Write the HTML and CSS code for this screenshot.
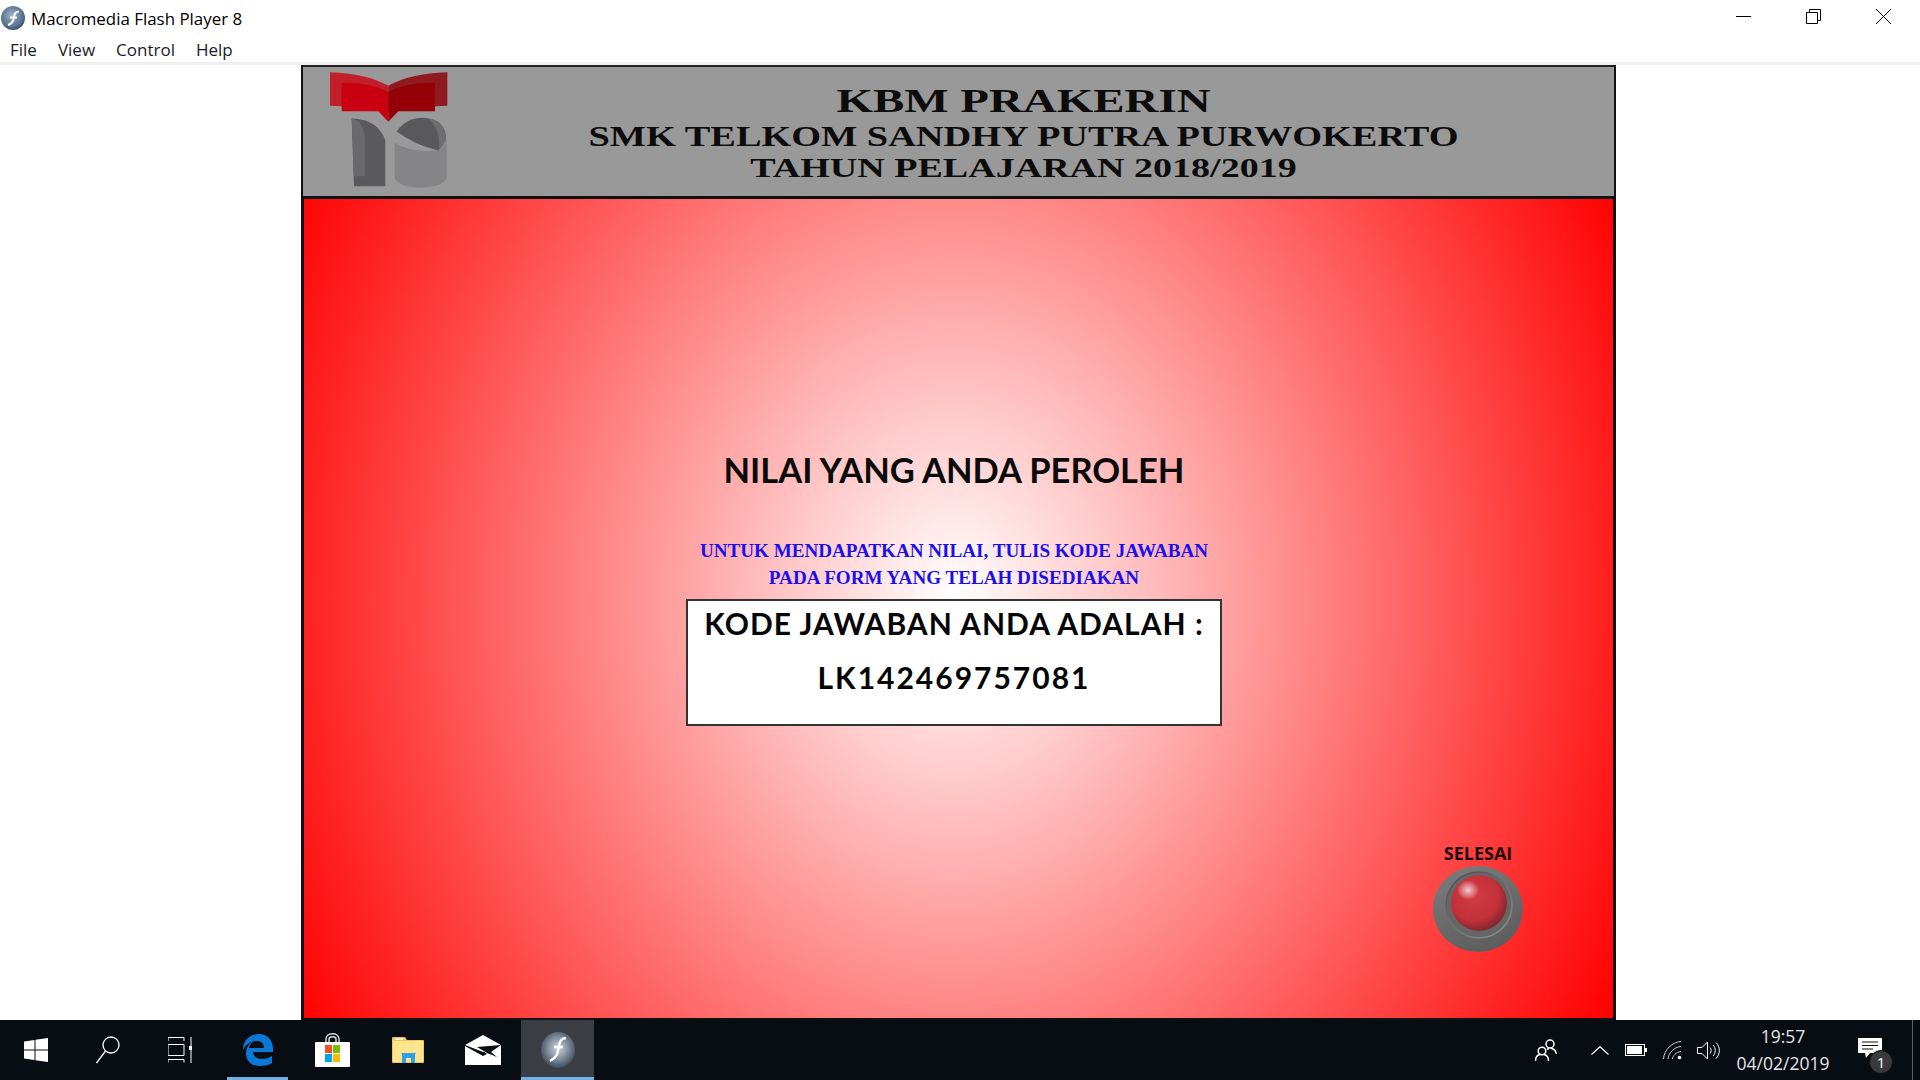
FILE: index.html
```html
<!DOCTYPE html>
<html lang="en">

<head>
    <meta charset="UTF-8">
    <title>Macromedia Flash Player 8</title>
    <link rel="stylesheet" href="styles.css">
</head>

<body>
    <div class="titlebar">
        <svg class="titlebar__icon" viewBox="0 0 24 24" width="24" height="24">
            <defs>
                <radialGradient id="flashSmall" cx="0.45" cy="0.4" r="0.65">
                    <stop offset="0" stop-color="#9fb1c6" />
                    <stop offset="0.7" stop-color="#5a7392" />
                    <stop offset="1" stop-color="#2f4258" />
                </radialGradient>
            </defs>
            <circle cx="12" cy="12" r="12" fill="url(#flashSmall)" />
            <path d="M18 5.500c-3.500 0-4.500 2-5 5.500s-1.500 7-6 8M9 11.500h7" fill="none" stroke="#fff" stroke-width="2" />
        </svg>
        <span class="titlebar__text">Macromedia Flash Player 8</span>
        <div class="window-controls">
            <svg viewBox="0 0 15 15" width="15" height="15">
                <path d="M0 7.500h15" stroke="#000" stroke-width="1" />
            </svg>
            <svg viewBox="0 0 15 15" width="15" height="15">
                <path d="M.5 3.500h11v11H.5zM3.500 3.500V.5h11v11h-3" fill="none" stroke="#000" stroke-width="1" />
            </svg>
            <svg viewBox="0 0 15 15" width="15" height="15">
                <path d="M0 0l15 15M15 0L0 15" stroke="#000" stroke-width="1" />
            </svg>
        </div>
    </div>
    <ul class="menubar">
        <li>File</li>
        <li>View</li>
        <li>Control</li>
        <li>Help</li>
    </ul>

    <div class="player">
        <div class="stage">
            <div class="stage__header">
                <svg class="logo" viewBox="60 30 354 350" width="118" height="117">
                    <path d="M60 33Q170 36 235 74V150L205 140L60 134z" fill="#c31f2b" />
                    <path d="M412 33Q300 36 235 74V150L265 140L412 134z" fill="#8f1a20" />
                    <path d="M95 65Q180 63 235 92V182L205 150H95z" fill="#c8000f" />
                    <path d="M375 65Q290 63 235 92V182L265 150H375z" fill="#950006" />
                    <path d="M125 172Q205 175 226 238V375H132z" fill="#5a595c" />
                    <path d="M125 172Q160 178 165 230V345H132z" fill="#6a696c" />
                    <path d="M254 245Q300 275 380 268L410 235V350Q400 378 330 380Q265 378 254 350z" fill="#858587" />
                    <path d="M260 210Q290 170 340 170Q408 175 408 235L385 268Q310 250 260 210z" fill="#59585b" />
                    <path d="M355 172Q408 180 408 235L385 268Q395 210 355 172z" fill="#6e6d70" />
                </svg>
                <div class="stage__title">
                    <div class="title-line title-line--big"><span>KBM PRAKERIN</span></div>
                    <div class="title-line title-line--mid"><span>SMK TELKOM SANDHY PUTRA PURWOKERTO</span></div>
                    <div class="title-line title-line--low"><span>TAHUN PELAJARAN 2018/2019</span></div>
                </div>
            </div>
            <div class="stage__body">
                <h2 class="score-title">NILAI YANG ANDA PEROLEH</h2>
                <p class="score-note">UNTUK MENDAPATKAN NILAI, TULIS KODE JAWABAN<br>PADA FORM YANG TELAH DISEDIAKAN</p>
                <div class="code-box">
                    <div class="code-box__label">KODE JAWABAN ANDA ADALAH :</div>
                    <div class="code-box__value">LK142469757081</div>
                </div>
                <div class="finish">
                    <span class="finish__label">SELESAI</span>
                    <svg viewBox="0 0 90 86" width="90" height="86">
                        <defs>
                            <linearGradient id="knobBase" x1="0.2" y1="0" x2="0.7" y2="1">
                                <stop offset="0" stop-color="#7b7b7b" />
                                <stop offset="1" stop-color="#5c5c5c" />
                            </linearGradient>
                            <linearGradient id="knobRing" x1="0.2" y1="0.1" x2="0.8" y2="0.9">
                                <stop offset="0" stop-color="#555" />
                                <stop offset="1" stop-color="#8a8a8a" />
                            </linearGradient>
                            <radialGradient id="knobBall" cx="0.42" cy="0.38" r="0.62">
                                <stop offset="0" stop-color="#d23c44" />
                                <stop offset="0.7" stop-color="#c2303a" />
                                <stop offset="1" stop-color="#84282e" />
                            </radialGradient>
                            <radialGradient id="knobShine" cx="0.5" cy="0.5" r="0.5">
                                <stop offset="0" stop-color="#fff" stop-opacity="0.75" />
                                <stop offset="1" stop-color="#fff" stop-opacity="0" />
                            </radialGradient>
                        </defs>
                        <ellipse cx="45" cy="43" rx="45" ry="43" fill="url(#knobBase)" />
                        <circle cx="46" cy="39" r="33" fill="#666" stroke="url(#knobRing)" stroke-width="1.500" />
                        <circle cx="46" cy="37" r="28" fill="url(#knobBall)" />
                        <ellipse cx="35" cy="24" rx="11" ry="10" fill="url(#knobShine)" />
                    </svg>
                </div>
            </div>
        </div>
    </div>

    <div class="taskbar">
        <div class="taskbar__btn">
            <svg viewBox="0 0 24 24" width="24" height="24">
                <path d="M0 3.500L10.500 2v9.500H0zM11.500 1.800L24 0v11.500H11.500zM0 12.500h10.500V22L0 20.500zM11.500 12.500H24V24l-12.500-1.800z" fill="#fff" />
            </svg>
        </div>
        <div class="taskbar__btn">
            <svg viewBox="0 0 24 28" width="24" height="28">
                <circle cx="15" cy="9" r="8" fill="none" stroke="#fff" stroke-width="1.300" />
                <path d="M9.500 15L.5 27" stroke="#fff" stroke-width="1.300" />
            </svg>
        </div>
        <div class="taskbar__btn">
            <svg viewBox="0 0 24 26" width="24" height="26">
                <path d="M0 4V.5h16v3.500M0 7.500h16v11H0zM16 25.500v-3H0v3M23 0v26" fill="none" stroke="#fff" stroke-width="1" />
                <rect x="21" y="9" width="4" height="4" fill="#fff" />
            </svg>
        </div>
        <div class="taskbar__apps">
            <div class="app app--open">
                <svg viewBox="0 0 30 32" width="30" height="32">
                    <path d="M0 16C0 6 7 0 16 0c9 0 14 7 14 15v3H10c.5 5 4 7 9 7 4 0 7-1 10-3v7c-3 2-7 3-12 3C7 32 3 26 3 19c0-5 3-10 8-12-3 2-4.500 4-5 7h15c0-4-2-7-7-7-6 0-11 3-14 9z" fill="#0a78d7" />
                </svg>
            </div>
            <div class="app">
                <svg viewBox="0 0 35 34" width="35" height="34">
                    <path d="M11 9V6c0-7 13-7 13 0v3M14 9V6c0-3 7-3 7 0v3" fill="none" stroke="#d8d8d8" stroke-width="1.500" />
                    <rect y="9" width="35" height="25" rx="1" fill="#fff" />
                    <rect x="10" y="12" width="7" height="8" fill="#f25022" />
                    <rect x="18" y="12" width="7" height="8" fill="#7fba00" />
                    <rect x="10" y="21" width="7" height="8" fill="#00a4ef" />
                    <rect x="18" y="21" width="7" height="8" fill="#ffb900" />
                </svg>
            </div>
            <div class="app">
                <svg viewBox="0 0 32 26" width="32" height="26">
                    <path d="M0 1a1 1 0 0 1 1-1h12l2 3h16a1 1 0 0 1 1 1v21a1 1 0 0 1-1 1H1a1 1 0 0 1-1-1z" fill="#f0c659" />
                    <path d="M1 4h30v21H1z" fill="#fde58f" />
                    <path d="M10 26V17h-.5a1 1 0 0 1 0-1h14a1 1 0 0 1 0 1H23v9h-4v-5h-5v5z" fill="#2f9fe6" />
                    <path d="M3 1.500h8v1.500H3z" fill="#fff" />
                </svg>
            </div>
            <div class="app">
                <svg viewBox="0 0 36 30" width="36" height="30">
                    <path d="M0 10L18 0l18 10-18 7z" fill="#fff" />
                    <path d="M0 11l18 10 4-2-4-3 18-6v20H0z" fill="#fff" />
                    <path d="M12 12l24-2-10 7 6 5-10-4z" fill="#0a0d12" />
                </svg>
            </div>
            <div class="app app--active">
                <svg viewBox="0 0 34 36" width="34" height="36">
                    <defs>
                        <radialGradient id="flashBig" cx="0.5" cy="0.45" r="0.6">
                            <stop offset="0" stop-color="#cfd6dd" />
                            <stop offset="0.55" stop-color="#7b8796" />
                            <stop offset="1" stop-color="#343e4d" />
                        </radialGradient>
                    </defs>
                    <ellipse cx="17" cy="18" rx="17" ry="18" fill="url(#flashBig)" />
                    <path d="M25 6c-5 0-6 3-7 8s-1 11-9 15M13 15h9" fill="none" stroke="#fff" stroke-width="2.400" />
                </svg>
            </div>
        </div>

        <div class="tray">
            <div class="tray__item tray__item--people">
                <svg viewBox="0 0 22 23" width="22" height="23">
                    <g fill="none" stroke="#fff" stroke-width="1.500">
                        <circle cx="15" cy="5" r="4" />
                        <circle cx="7" cy="12" r="3.800" />
                        <path d="M.5 22c0-3.500 2-6 4.500-6.500M13.500 22c0-3.500-2-6-4.500-6.500M12 10.500c.8-.6 1.500-1 2-1.200M16 9.300c3 .6 5 3 5.300 5.700" />
                    </g>
                </svg>
            </div>
            <div class="tray__item tray__item--sm">
                <svg viewBox="0 0 18 9" width="18" height="9">
                    <path d="M.5 8.500L9 .7l8.500 7.800" fill="none" stroke="#fff" stroke-width="1.200" />
                </svg>
            </div>
            <div class="tray__item tray__item--sm">
                <svg viewBox="0 0 22 12" width="22" height="12">
                    <rect x=".5" y=".5" width="19" height="11" fill="none" stroke="#fff" />
                    <rect x="2" y="2" width="15" height="8" fill="#fff" />
                    <rect x="20" y="4" width="2" height="4" fill="#fff" />
                </svg>
            </div>
            <div class="tray__item tray__item--wifi">
                <svg viewBox="0 0 19 19" width="19" height="19">
                    <g fill="none" stroke="#ccc" stroke-width="1">
                        <path d="M.5 18C1 9 9 1 18 .5M5 18c.5-6 6-12 13-12.500M9.500 18c.3-3 3.500-7 8.500-7.500" />
                    </g>
                    <circle cx="16.500" cy="16.500" r="1.800" fill="#fff" />
                </svg>
            </div>
            <div class="tray__item tray__item--vol">
                <svg viewBox="0 0 23 19" width="23" height="19">
                    <path d="M.5 6.500h4.500L10.500 1v17L5 12.500H.5z" fill="none" stroke="#fff" />
                    <path d="M13 6.500c1.500 1.500 1.500 4.500 0 6M16 4c3 3 3 8 0 11M19 1.500c4.500 4.500 4.500 11.500 0 16" fill="none" stroke="#fff" />
                </svg>
            </div>
            <div class="clock">
                <span>19:57</span>
                <span>04/02/2019</span>
            </div>
            <div class="tray__item tray__item--notify">
                <svg viewBox="0 0 24 20" width="24" height="20">
                    <path d="M0 0h24v15H12l-4 5-1-5H0z" fill="#fff" />
                    <path d="M4 4h16M4 7.500h16M4 11h11" stroke="#111" stroke-width="1.200" />
                </svg>
                <span class="badge">1</span>
            </div>
            <div class="show-desktop"></div>
        </div>
    </div>
</body>

</html>
```

FILE: styles.css
```css
* {
    box-sizing: border-box;
}

body {
    height: 1080px;
    margin: 0;
    display: flex;
    flex-direction: column;
    overflow: hidden;
    background-color: #fff;
    font-family: "Open Sans", sans-serif;
}

.titlebar {
    height: 36px;
    padding: 6px 29px 0 1px;
    display: flex;
    align-items: flex-start;
    flex-shrink: 0;
}

.titlebar__text {
    margin-left: 6px;
    font-size: 16.900px;
    line-height: 26px;
    color: #000;
}

.window-controls {
    margin-left: auto;
    margin-top: 3px;
    width: 155px;
    display: flex;
    justify-content: space-between;
}

.menubar {
    height: 29px;
    margin: 0;
    padding: 0 0 0 10px;
    display: flex;
    gap: 21px;
    flex-shrink: 0;
    list-style: none;
    border-bottom: 3px solid #f0f0f0;
    font-size: 17px;
    line-height: 27px;
    color: #1a1a2a;
}

.player {
    flex: 1;
    min-height: 0;
    padding-left: 301px;
    display: flex;
}

.stage {
    width: 1315px;
    display: flex;
    flex-direction: column;
    border: solid #111;
    border-width: 0 3px 2px;
}

.stage__header {
    height: 134px;
    margin: 0 -1px;
    padding: 4px 0 0 27px;
    display: flex;
    flex-shrink: 0;
    background-color: #999;
    border-top: 2px solid #222;
    border-bottom: 3px solid #111;
}

.stage__title {
    flex: 1;
    padding: 9.500px 15px 0 0;
    font-family: "Liberation Serif", serif;
    font-weight: bold;
    color: #0c0c0c;
    text-align: center;
}

.title-line span {
    display: inline-block;
    white-space: nowrap;
}

.title-line--big {
    font-size: 34px;
    line-height: 39px;
    transform: scaleX(1.38);
}

.title-line--mid {
    font-size: 29px;
    line-height: 32px;
    transform: scaleX(1.322);
}

.title-line--low {
    font-size: 28px;
    line-height: 32px;
    transform: scaleX(1.358);
}

.stage__body {
    flex: 1;
    padding: 253px 9px 66px 0;
    display: flex;
    flex-direction: column;
    align-items: center;
    background: radial-gradient(ellipse 750px 870px at 650px 400px, #fff 0%, #f00 100%);
}

.score-title {
    margin: 0;
    font-family: Lato, sans-serif;
    font-size: 34.500px;
    line-height: 36px;
    font-weight: 700;
    color: #0a0a0a;
}

.score-note {
    margin: 49px 0 0;
    font-family: "Liberation Serif", serif;
    font-size: 19.100px;
    line-height: 27px;
    font-weight: bold;
    color: #1a10ee;
    text-align: center;
}

.code-box {
    width: 536px;
    height: 127px;
    margin-top: 8px;
    background-color: #fff;
    border: 2px solid #333;
    text-align: center;
    font-family: Lato, sans-serif;
    font-size: 30px;
    line-height: 44px;
    font-weight: 700;
    color: #050505;
}

.code-box__label {
    letter-spacing: 1px;
    white-space: nowrap;
}

.code-box__value {
    margin-top: 10px;
    letter-spacing: 2px;
}

.finish {
    width: 90px;
    margin: auto 81px 0 0;
    align-self: flex-end;
    display: flex;
    flex-direction: column;
    align-items: center;
}

.finish__label {
    font-size: 18px;
    line-height: 22px;
    font-weight: 700;
    color: #1c0a0e;
    margin-bottom: 2px;
    white-space: nowrap;
}

.taskbar {
    height: 60px;
    display: flex;
    flex-shrink: 0;
    background-color: #080c13;
}

.taskbar__btn {
    width: 72px;
    display: flex;
    align-items: center;
    justify-content: center;
}

.taskbar__apps {
    margin-left: 5px;
    display: flex;
    gap: 2px;
}

.app {
    width: 73px;
    display: flex;
    align-items: center;
    justify-content: center;
    position: relative;
}

.app--open::after,
.app--active::after {
    content: "";
    position: absolute;
    left: 6px;
    right: 6px;
    bottom: 0;
    height: 3px;
    background-color: #6fb2e8;
}

.app--active {
    background-color: #3a3d44;
}

.app--active::after {
    left: 0;
    right: 0;
}

.tray {
    margin-left: auto;
    display: flex;
    align-items: stretch;
    color: #e6e6e6;
}

.tray__item {
    display: flex;
    align-items: center;
    justify-content: center;
}

.tray__item--people {
    width: 72px;
}

.tray__item--sm {
    width: 36px;
}

.tray__item--wifi {
    width: 37px;
}

.tray__item--vol {
    width: 35px;
}

.tray__item--notify {
    width: 72px;
    position: relative;
    align-items: flex-start;
    padding: 18px 12px 0 0;
}

.clock {
    width: 114px;
    padding-top: 3px;
    display: flex;
    flex-direction: column;
    align-items: center;
    font-size: 17.500px;
    line-height: 27px;
}

.badge {
    position: absolute;
    left: 29px;
    top: 30px;
    width: 24px;
    height: 24px;
    border-radius: 50%;
    background-color: #3a3a3d;
    border: 1px solid #111;
    color: #fff;
    font-size: 15px;
    line-height: 22px;
    text-align: center;
}

.show-desktop {
    width: 8px;
    border-left: 1px solid #5b5f66;
}
```
